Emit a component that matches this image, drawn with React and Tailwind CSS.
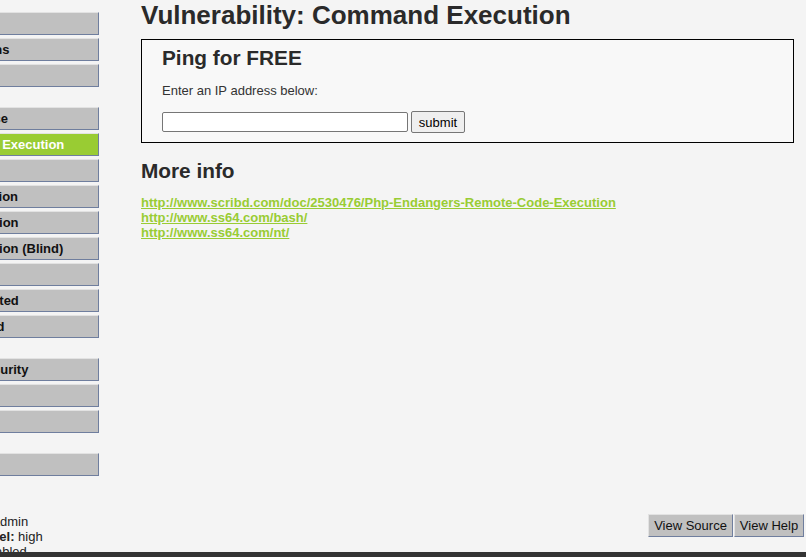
import React from "react";

const groups = [
  ["Home", "Instructions", "Setup"],
  [
    "Brute Force",
    "Command Execution",
    "CSRF",
    "File Inclusion",
    "SQL Injection",
    "SQL Injection (Blind)",
    "Upload",
    "XSS reflected",
    "XSS stored",
  ],
  ["DVWA Security", "PHP Info", "About"],
  ["Logout"],
];

function MenuItem({ label }) {
  const selected = label === "Command Execution";
  return (
    <div
      className={
        "ml-[-71px] w-[170px] h-[23px] pl-[6px] pt-[3px] leading-[15px] text-[13px] font-bold whitespace-nowrap border-t border-r border-b border-t-[#e2e2e2] border-r-[#6f7e9e] border-b-[#6f7e9e] " +
        (selected ? "bg-[#99cc33] text-white" : "bg-[#c0c0c0] text-[#111]")
      }
    >
      {label}
    </div>
  );
}

export default function App() {
  return (
    <div
      className="w-[806px] h-[557px] overflow-hidden bg-[#f4f4f4] text-[#333]"
      style={{ fontFamily: '"Liberation Sans", Arial, sans-serif' }}
    >
      <div className="h-[552px] overflow-hidden flex">
        {/* sidebar */}
        <div className="w-[99px] shrink-0 overflow-hidden pt-[12px] flex flex-col gap-[20px]">
          {groups.map((g, i) => (
            <div key={i} className="flex flex-col gap-[3px]">
              {g.map((l) => (
                <MenuItem key={l} label={l} />
              ))}
            </div>
          ))}
          <div className="ml-[-78px] mt-[18px] text-[13px] leading-[15px] text-[#222] whitespace-nowrap">
            <div>
              <b>Username:</b> admin
            </div>
            <div>
              <b>Security Level:</b> high
            </div>
            <div>
              <b>PHPIDS:</b> disabled
            </div>
          </div>
        </div>

        {/* main */}
        <div className="flex-1 pl-[42px] flex flex-col">
          <h1 className="text-[26px] leading-[30px] font-bold text-[#2a2a2a] whitespace-nowrap">
            Vulnerability: Command Execution
          </h1>
          <div className="mt-[9px] w-[653px] border border-black bg-[#f8f8f8] pl-[20px] pt-[6px] pb-[9px]">
            <h2 className="text-[20.8px] leading-[24px] font-bold text-[#2a2a2a]">Ping for FREE</h2>
            <p className="mt-[13px] text-[13px] leading-[15px] text-[#333]">Enter an IP address below:</p>
            <div className="mt-[13px] h-[22px] flex items-center">
              <input
                type="text"
                className="w-[246px] h-[20px] bg-white border border-[#767676] rounded-[2px] outline-none"
              />
              <button className="ml-[3px] w-[54px] h-[22px] bg-[#efefef] border border-[#767676] rounded-[2px] text-[13px] text-black leading-[15px]">
                submit
              </button>
            </div>
          </div>

          <h3 className="mt-[16px] text-[20.8px] leading-[24px] font-bold text-[#2a2a2a]">More info</h3>
          <div className="mt-[12px] flex flex-col text-[13px] leading-[15px] font-bold">
            <a className="text-[#99cc33] underline w-fit whitespace-nowrap" href="#">
              http://www.scribd.com/doc/2530476/Php-Endangers-Remote-Code-Execution
            </a>
            <a className="text-[#99cc33] underline w-fit" href="#">
              http://www.ss64.com/bash/
            </a>
            <a className="text-[#99cc33] underline w-fit" href="#">
              http://www.ss64.com/nt/
            </a>
          </div>

          <div className="mt-auto mb-[15px] mr-[2px] flex justify-end gap-[1px]">
            <button className="w-[85px] h-[23px] bg-[#c0c0c0] border border-t-[#e2e2e2] border-l-[#e2e2e2] border-r-[#6f7e9e] border-b-[#6f7e9e] text-[13px] leading-[15px] text-[#111]">
              View Source
            </button>
            <button className="w-[70px] h-[23px] bg-[#c0c0c0] border border-t-[#e2e2e2] border-l-[#e2e2e2] border-r-[#6f7e9e] border-b-[#6f7e9e] text-[13px] leading-[15px] text-[#111]">
              View Help
            </button>
          </div>
        </div>
      </div>
      <div className="h-[5px] bg-[#333]" />
    </div>
  );
}
